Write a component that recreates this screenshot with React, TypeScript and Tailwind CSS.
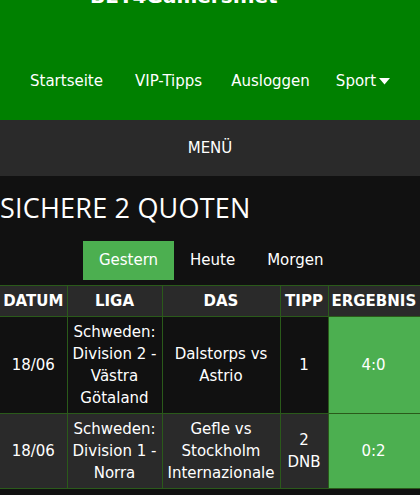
import React from 'react';

const tahoma = { fontFamily: 'Tahoma, "DejaVu Sans", sans-serif' };

type Row = { date: string; league: string[]; match: string[]; tip: string[]; result: string; dark: boolean };

const rows: Row[] = [
  {
    date: '18/06',
    league: ['Schweden:', 'Division 2 -', 'Västra', 'Götaland'],
    match: ['Dalstorps vs', 'Astrio'],
    tip: ['1'],
    result: '4:0',
    dark: true,
  },
  {
    date: '18/06',
    league: ['Schweden:', 'Division 1 -', 'Norra'],
    match: ['Gefle vs', 'Stockholm', 'Internazionale'],
    tip: ['2', 'DNB'],
    result: '0:2',
    dark: false,
  },
];

function Lines({ items }: { items: string[] }) {
  return (
    <>
      {items.map((t) => (
        <div key={t}>{t}</div>
      ))}
    </>
  );
}

export default function App() {
  return (
    <div className="w-[420px] h-[495px] overflow-hidden bg-[#111111] text-white" style={tahoma}>
      <header className="bg-[#008000] h-[120px] overflow-hidden">
        <div className="pl-[90px] -mt-[14px] text-[20px] font-bold leading-[20px]">BET4Gamers.net</div>
        <nav className="flex items-center mt-[65px] text-[15px] leading-[20px]">
          <span className="ml-[30px]">Startseite</span>
          <span className="ml-[32px]">VIP-Tipps</span>
          <span className="ml-[29px]">Ausloggen</span>
          <span className="ml-[26px] flex items-center gap-[3px]">
            Sport
            <svg width="11" height="7" viewBox="0 0 11 7">
              <path d="M0 0h11L5.5 6.5z" fill="white" />
            </svg>
          </span>
        </nav>
      </header>

      <div className="bg-[#2a2a2a] h-[56px] flex items-center justify-center text-[15px]">MENÜ</div>

      <h1 className="text-[27px] leading-[34px] mt-[15px] tracking-[0.2px]" style={{ fontFamily: '"Open Sans", "Noto Sans", sans-serif' }}>
        SICHERE 2 QUOTEN
      </h1>

      <div className="flex items-center h-[39px] mt-[16px] text-[15px]">
        <span className="ml-[83px] w-[91px] h-[39px] bg-[#4caf50] flex items-center justify-center">Gestern</span>
        <span className="ml-[16px]">Heute</span>
        <span className="ml-[32px]">Morgen</span>
      </div>

      <table className="mt-[5px] border-collapse text-center text-[15px] leading-[22px] w-[440px] table-fixed">
        <colgroup>
          <col className="w-[67px]" />
          <col className="w-[95px]" />
          <col className="w-[118px]" />
          <col className="w-[48px]" />
          <col className="w-[112px]" />
        </colgroup>
        <thead>
          <tr className="bg-[#2a2a2a] h-[31px] text-[15px] font-bold">
            <th className="border border-[#2a5a1a] border-l-0">DATUM</th>
            <th className="border border-[#2a5a1a]">LIGA</th>
            <th className="border border-[#2a5a1a]">DAS</th>
            <th className="border border-[#2a5a1a]">TIPP</th>
            <th className="border border-[#2a5a1a] text-left pl-[3px]">ERGEBNIS</th>
          </tr>
        </thead>
        <tbody>
          {rows.map((r) => (
            <tr key={r.result} className={r.dark ? 'bg-[#111111]' : 'bg-[#2a2a2a]'}>
              <td className="border border-[#2a5a1a] border-l-0 py-[4px]">{r.date}</td>
              <td className="border border-[#2a5a1a] py-[4px]">
                <Lines items={r.league} />
              </td>
              <td className="border border-[#2a5a1a] py-[4px]">
                <Lines items={r.match} />
              </td>
              <td className="border border-[#2a5a1a] py-[4px]">
                <Lines items={r.tip} />
              </td>
              <td className="border border-[#2a5a1a] bg-[#4caf50] py-[4px] text-left pl-[33px]">{r.result}</td>
            </tr>
          ))}
        </tbody>
      </table>
    </div>
  );
}
